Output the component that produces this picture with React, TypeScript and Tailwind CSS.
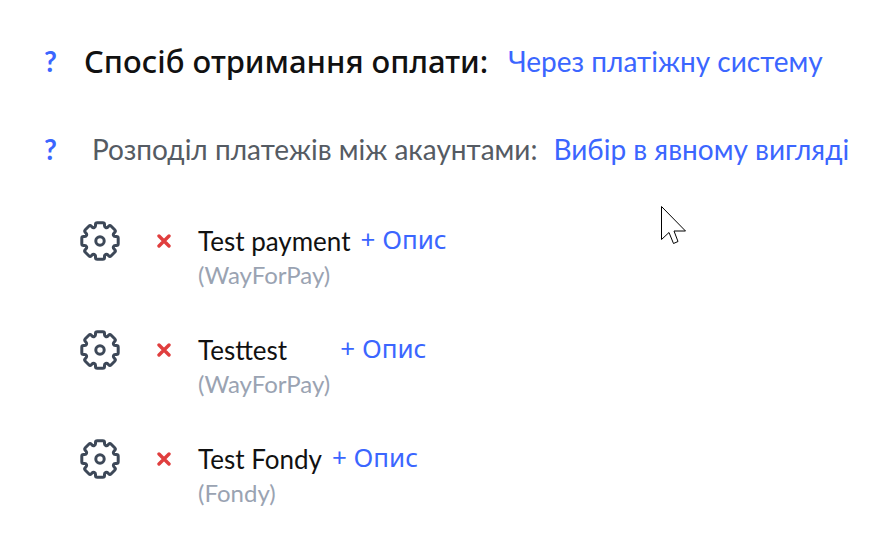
interface Account {
  id: number;
  name: string;
  provider: string;
}

const accounts: Account[] = [
  { id: 1, name: 'Test payment', provider: 'WayForPay' },
  { id: 2, name: 'Testtest', provider: 'WayForPay' },
  { id: 3, name: 'Test Fondy', provider: 'Fondy' },
];

function GearIcon() {
  return (
    <svg viewBox="0 0 40 40" className="h-10 w-10" fill="none" stroke="currentColor" strokeWidth="3" strokeLinejoin="round" aria-hidden="true">
      <path d="M17.3 1.8h5.4q1.8 0 1.8 1.8v1.2q0 1.2 1.2 1.7t2.1-.4l.8-.8q1.3-1.3 2.6 0l3.5 3.5q1.3 1.3 0 2.6l-.8.8q-.9.9-.4 2.1t1.7 1.2h1.2q1.8 0 1.8 1.8v5.4q0 1.8-1.8 1.8h-1.2q-1.2 0-1.7 1.2t.4 2.1l.8.8q1.3 1.3 0 2.6l-3.5 3.5q-1.3 1.3-2.6 0l-.8-.8q-.9-.9-2.1-.4t-1.2 1.7v1.2q0 1.8-1.8 1.8h-5.4q-1.8 0-1.8-1.8v-1.2q0-1.2-1.2-1.7t-2.1.4l-.8.8q-1.3 1.3-2.6 0l-3.5-3.5q-1.3-1.3 0-2.6l.8-.8q.9-.9.4-2.1t-1.7-1.2h-1.2q-1.8 0-1.8-1.8v-5.4q0-1.8 1.8-1.8h1.2q1.2 0 1.7-1.2t-.4-2.1l-.8-.8q-1.3-1.3 0-2.6l3.5-3.5q1.3-1.3 2.6 0l.8.8q.9.9 2.1.4t1.2-1.7v-1.2q0-1.8 1.8-1.8z" />
      <circle cx="20" cy="20" r="4.2" />
    </svg>
  );
}

function CrossIcon() {
  return (
    <svg viewBox="0 0 14 14" className="h-3.5 w-3.5" fill="none" stroke="currentColor" strokeWidth="3.4" strokeLinecap="round" aria-hidden="true">
      <path d="M2 2l10 10M12 2L2 12" />
    </svg>
  );
}

function HelpButton() {
  return (
    <button type="button" aria-label="?" className="w-3 shrink-0 text-[28px] font-bold text-[#3b66ff]">
      ?
    </button>
  );
}

function AccountRow({ account }: { account: Account }) {
  return (
    <li className="flex items-start">
      <button type="button" aria-label="Налаштування" className="text-[#3d4858]">
        <GearIcon />
      </button>
      <button type="button" aria-label="Видалити" className="ml-[37px] flex h-10 items-center text-[#e03e3e]">
        <CrossIcon />
      </button>
      <div className="ml-[27px] flex items-start gap-2.5">
        <div>
          <div className="text-[26px] leading-10 text-[#111111]">{account.name}</div>
          <div className="text-[24px] leading-7 text-[#9aa3b2]">({account.provider})</div>
        </div>
        <a href="#" className="font-['Noto_Sans',sans-serif] text-[26px] leading-9 text-[#3b66ff]">
          + Опис
        </a>
      </div>
    </li>
  );
}

export default function App() {
  return (
    <main className="bg-white px-11 pt-10 pb-9 font-['Lato',sans-serif]">
      <div className="flex items-center leading-[42px]">
        <HelpButton />
        <h1 className="ml-7 font-['Noto_Sans',sans-serif] text-[31px] font-medium whitespace-nowrap text-[#111111]">
          Спосіб отримання оплати:
        </h1>
        <a href="#" className="ml-5 text-[28px] whitespace-nowrap text-[#3b66ff]">
          Через платіжну систему
        </a>
      </div>

      <div className="mt-[46px] flex items-center leading-[42px]">
        <HelpButton />
        <h2 className="ml-9 text-[28px] whitespace-nowrap text-[#555b63]">Розподіл платежів між акаунтами:</h2>
        <a href="#" className="ml-4 text-[28px] whitespace-nowrap text-[#3b66ff]">
          Вибір в явному вигляді
        </a>
      </div>

      <ul className="mt-[51px] ml-9 space-y-[41px]">
        {accounts.map((account) => (
          <AccountRow key={account.id} account={account} />
        ))}
      </ul>

      {/* Mouse pointer */}
      <svg viewBox="0 0 26 40" className="absolute top-[205px] left-[660px] h-10 w-[26px]" fill="white" stroke="black" strokeWidth="1" aria-hidden="true">
        <path d="M1.5 1.5v33l7.5-7 4.5 11 4.5-2-4-10.500h11.500z" />
      </svg>
    </main>
  );
}
